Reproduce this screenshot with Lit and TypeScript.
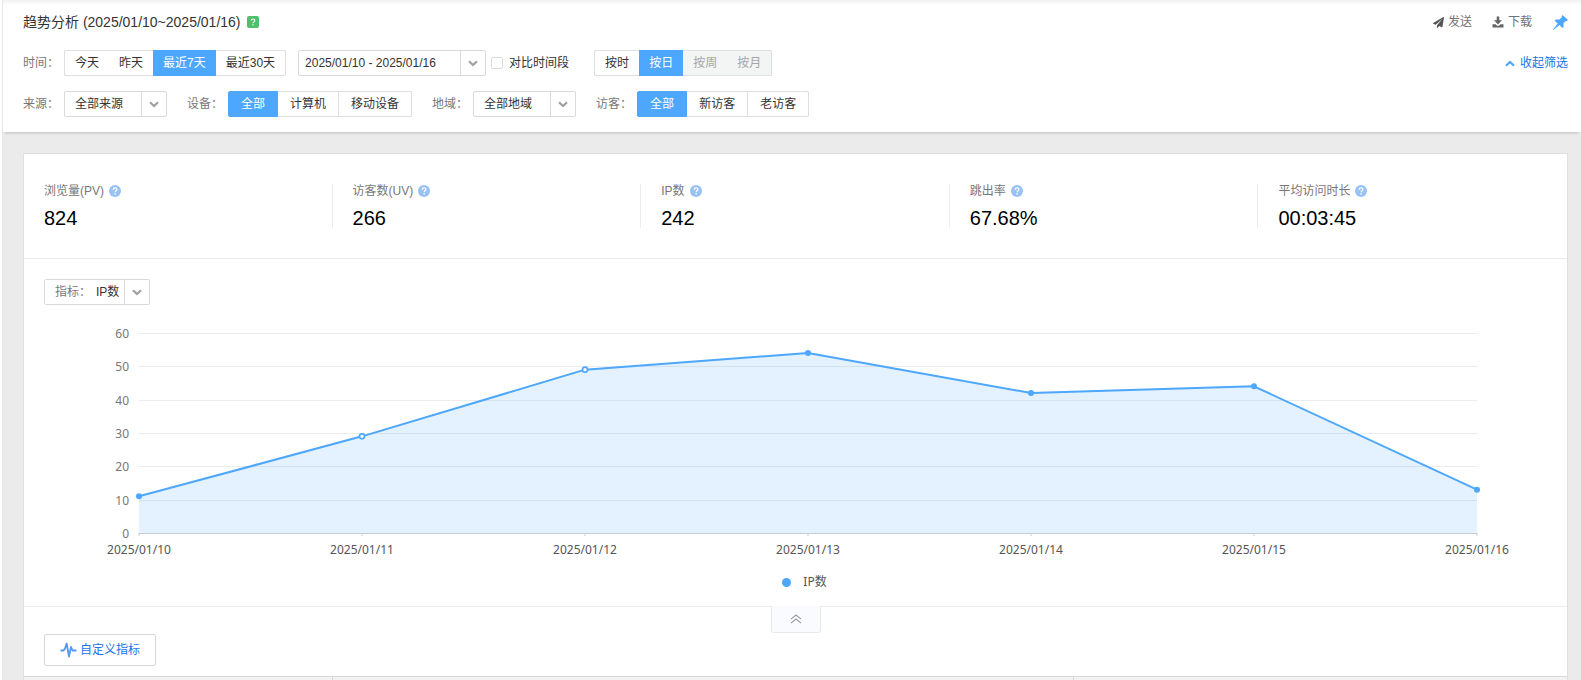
import { LitElement, html, css, svg } from "lit";
import { customElement, property, state } from "lit/decorators.js";
import { classMap } from "lit/directives/class-map.js";

const FONT = css`"Liberation Sans", Arial, "Noto Sans CJK SC", sans-serif`;

interface Item {
  label: string;
  disabled?: boolean;
}

@customElement("segment-group")
class SegmentGroup extends LitElement {
  @property({ attribute: false }) items: Item[] = [];
  @property({ type: Number }) selected = 0;
  @property({ type: Boolean, reflect: true }) divided = false;

  static styles = css`
    :host {
      display: block;
    }
    .group {
      display: flex;
      box-sizing: border-box;
      height: 26px;
      border: 1px solid #dedfe0;
      border-radius: 2px;
      background: #fff;
    }
    .item {
      margin: -1px 0;
      padding: 0 10px;
      border: 1px solid #dedfe0;
      border-width: 1px 0;
      background: transparent;
      font: 12px/24px ${FONT};
      color: #333;
      white-space: nowrap;
      cursor: pointer;
    }
    .item:first-child {
      margin-left: -1px;
      border-radius: 2px 0 0 2px;
      border-left-width: 1px;
    }
    .item:last-child {
      margin-right: -1px;
      border-right-width: 1px;
      border-radius: 0 2px 2px 0;
    }
    :host([divided]) .item {
      padding: 0 12px;
      border-right-width: 1px;
    }
    .item:disabled {
      background: #f3f4f4;
      color: #a6a6a6;
      cursor: default;
    }
    .group .item.active {
      background: #4da7fd;
      border-color: #4da7fd;
      color: #fff;
    }
  `;

  render() {
    return html`<div class="group" role="group">
      ${this.items.map(
        (it, i) => html`<button
          type="button"
          class=${classMap({ item: true, active: i === this.selected })}
          ?disabled=${it.disabled}
          aria-pressed=${i === this.selected}
          @click=${() => (this.selected = i)}
        >${it.label}</button>`
      )}
    </div>`;
  }
}

const chevron = html`<svg class="chevron" width="10" height="7" viewBox="0 0 10 7" aria-hidden="true">
  <path d="M1 1.2 5 5 9 1.2" fill="none" stroke="currentColor" stroke-width="2.2" />
</svg>`;

const help = html`<svg class="help" width="12" height="12" viewBox="0 0 12 12" role="img" aria-label="help">
  <circle cx="6" cy="6" r="6" fill="#97c2f3" />
  <path d="M4.2 4.7C4.2 2.4 7.9 2.4 7.9 4.6 7.9 5.8 6.1 5.9 6.1 7.3" fill="none" stroke="#fff" stroke-width="1.3" />
  <rect x="5.4" y="8.2" width="1.4" height="1.4" fill="#fff" />
</svg>`;

@customElement("trend-chart")
class TrendChart extends LitElement {
  @property({ attribute: false }) dates: string[] = [];
  @property({ attribute: false }) values: number[] = [];
  @property({ attribute: false }) hollow: number[] = [];
  @property() name = "";

  static styles = css`
    :host {
      display: block;
      padding: 28px 90px 0 90px;
    }
    .body {
      display: grid;
      grid-template-columns: 15px 1fr;
      column-gap: 10px;
    }
    .y-axis {
      display: flex;
      flex-direction: column;
      justify-content: space-between;
      align-items: flex-end;
      height: 202px;
      margin-bottom: -2px;
    }
    .y-label,
    .x-label {
      display: flex;
      align-items: center;
      justify-content: center;
      font: 12px/16px "Noto Sans", "Open Sans", sans-serif;
      white-space: nowrap;
    }
    .y-label {
      height: 2px;
      color: #777;
    }
    .plot {
      display: block;
      width: 100%;
      height: 200px;
      overflow: visible;
    }
    .x-axis {
      grid-column: 2;
      display: flex;
      justify-content: space-between;
      padding-top: 9px;
    }
    .x-label {
      width: 0;
      color: #555;
    }
    .legend {
      display: flex;
      align-items: center;
      justify-content: center;
      gap: 12px;
      height: 18px;
      margin-top: 15px;
      padding-left: 18px;
      font: 12px/18px "Noto Sans", "Noto Sans CJK SC", sans-serif;
      color: #555;
    }
    .dot {
      width: 9px;
      height: 9px;
      border-radius: 50%;
      background: #4da7fd;
    }
  `;

  render() {
    const max = 60;
    const ticks = [60, 50, 40, 30, 20, 10, 0];
    const last = Math.max(this.values.length - 1, 1);
    const y = (v: number) => 200 - (v / max) * 200;
    const gy = (v: number) => Math.round(y(v)) + 0.5;
    const line = this.values.map((v, i) => `${(i / last) * 1000},${y(v)}`).join(" ");
    return html`
      <div class="body">
        <div class="y-axis">${ticks.map((t) => html`<span class="y-label">${t}</span>`)}</div>
        <svg class="plot" role="img" aria-label=${this.name}>
          ${ticks.map(
            (t) => svg`<line x1="0" x2="100%" y1=${gy(t)} y2=${gy(t)} stroke=${t ? "#ececec" : "#ccc"} />`
          )}
          ${this.values.map((_, i) => {
            const x = `${(i / last) * 100}%`;
            return svg`<line x1=${x} x2=${x} y1="200" y2="203" stroke="#ccc" />`;
          })}
          <svg width="100%" height="200" viewBox="0 0 1000 200" preserveAspectRatio="none" overflow="visible">
            <polygon points="0,200 ${line} 1000,200" fill="#4da2fa" fill-opacity="0.15" />
            <polyline
              points=${line}
              fill="none"
              stroke="#4da7fd"
              stroke-width="2"
              stroke-linejoin="round"
              vector-effect="non-scaling-stroke"
            />
          </svg>
          ${this.values.map((v, i) => {
            const open = this.hollow.includes(i);
            return svg`<circle cx=${`${(i / last) * 100}%`} cy=${y(v)} r=${open ? 2.5 : 3}
              fill=${open ? "#fff" : "#4da7fd"} stroke="#4da7fd" stroke-width=${open ? 1.6 : 0} />`;
          })}
        </svg>
        <div class="x-axis">${this.dates.map((d) => html`<span class="x-label">${d}</span>`)}</div>
      </div>
      <div class="legend"><span class="dot"></span>${this.name}</div>
    `;
  }
}

@customElement("app-root")
class AppRoot extends LitElement {
  @state() private compare = false;

  static styles = css`
    :host {
      display: block;
      box-sizing: border-box;
      min-height: 100vh;
      padding-left: 2px;
      overflow: hidden;
      background: #fff;
      font: 12px/18px ${FONT};
      color: #333;
    }
    .page {
      min-height: 100vh;
      background: #ebebeb;
      border-left: 1px solid #e8e8e8;
      box-sizing: border-box;
    }
    .header {
      display: flex;
      flex-direction: column;
      height: 132px;
      box-sizing: border-box;
      padding: 12px 13px 15px 20px;
      background: linear-gradient(#f1f1f1, #fff 5px);
      box-shadow: 0 3px 3px -2px rgba(0, 0, 0, 0.2);
    }
    .row {
      display: flex;
      align-items: center;
    }
    .title-row {
      height: 20px;
      margin-bottom: 18px;
    }
    .filters {
      height: 26px;
      margin-bottom: 15px;
    }
    .title {
      margin: 0;
      font-size: 14px;
      line-height: 20px;
      font-weight: normal;
    }
    .badge {
      width: 12px;
      height: 12px;
      margin-left: 6px;
    }
    .push {
      margin-left: auto;
    }
    .action {
      display: flex;
      align-items: center;
      gap: 4px;
      margin-right: 20px;
      padding: 0;
      border: 0;
      background: none;
      font: inherit;
      color: #737373;
      cursor: pointer;
    }
    .action.pin {
      margin: 0;
      padding-left: 1px;
      color: #4da7fd;
    }
    .link {
      display: flex;
      align-items: center;
      gap: 5px;
      color: #1a73e8;
      text-decoration: none;
    }
    .link .chevron {
      color: #4da7fd;
      transform: rotate(180deg);
    }
    .label {
      margin-right: 5px;
      color: #777;
    }
    .spaced {
      margin-left: 20px;
    }
    .box {
      display: grid;
      grid-template-columns: auto 25px;
      box-sizing: border-box;
      height: 26px;
      border: 1px solid #d9d9d9;
      border-radius: 2px;
      background: #fff;
    }
    .box .native,
    .prefix {
      grid-row: 1;
      grid-column: 1;
    }
    .box .native {
      grid-column: 1 / 3;
      box-sizing: border-box;
      width: 101px;
      height: 24px;
      margin: 0;
      padding: 0 36px 0 10px;
      border: 0;
      outline-offset: -1px;
      appearance: none;
      background: transparent;
      font: 12px/24px ${FONT};
      color: #333;
    }
    .arrow {
      grid-row: 1;
      grid-column: 2;
      display: flex;
      align-items: center;
      justify-content: center;
      padding: 0;
      border: 0;
      border-left: 1px solid #d9d9d9;
      background: none;
      color: #a0a0a0;
      pointer-events: none;
    }
    .dates {
      margin-left: 12px;
    }
    .dates .native {
      width: 186px;
      padding: 0 30px 0 6px;
    }
    .check {
      display: flex;
      align-items: center;
      gap: 6px;
      margin: 0 25px 0 5px;
    }
    .tick {
      width: 12px;
      height: 12px;
      margin: 0;
      border: 1px solid #dcdcdc;
      border-radius: 2px;
      appearance: none;
      background: #fff;
    }
    .tick:checked {
      background: #4da7fd;
    }
    .card {
      margin: 21px 13px 0 20px;
      border: 1px solid #dfdfdf;
      background: #fff;
    }
    .stats {
      display: grid;
      grid-template-columns: repeat(5, 1fr);
      margin: 0;
      padding: 30px 0;
      border-bottom: 1px solid #ececec;
    }
    .stat {
      height: 44px;
      box-sizing: border-box;
      padding-left: 20px;
      border-right: 1px solid #ececec;
    }
    .stat:last-child {
      border-right: 0;
    }
    .stat-name {
      display: flex;
      align-items: center;
      gap: 5px;
      height: 14px;
      color: #777;
    }
    .stat-value {
      margin: 8px 0 0;
      font-size: 20px;
      line-height: 24px;
      color: #000;
    }
    .metric {
      display: inline-grid;
      margin: 20px 0 0 20px;
    }
    .prefix {
      padding-left: 10px;
      line-height: 24px;
      color: #777;
    }
    .metric .native {
      width: 104px;
      padding: 0 26px 0 51px;
    }
    .metric-row {
      display: flex;
    }
    .fold {
      display: flex;
      justify-content: center;
      height: 27px;
      margin-top: 15px;
      border-top: 1px solid #ececec;
    }
    .fold-tab {
      width: 50px;
      height: 27px;
      margin-top: -1px;
      padding: 0;
      border: 1px solid #e8e9ea;
      border-top: 0;
      border-radius: 0 0 3px 3px;
      background: #fafbfe;
      color: #999;
    }
    .custom {
      display: flex;
      align-items: center;
      gap: 3px;
      box-sizing: border-box;
      height: 32px;
      margin: 0 0 10px 20px;
      padding: 0 15px;
      border: 1px solid #d6d6d6;
      border-radius: 2px;
      background: #fff;
      font: inherit;
      color: #1a73e8;
    }
    .table {
      width: 100%;
      border-collapse: collapse;
      table-layout: fixed;
    }
    .col-a {
      width: 20%;
    }
    .col-b {
      width: 48%;
    }
    .th {
      height: 36px;
      padding: 0;
      border-top: 1px solid #d9d9d9;
      border-right: 1px solid #d9d9d9;
      background: #f3f3f3;
    }
    .th:last-child {
      border-right: 0;
    }
    .clip {
      height: 5px;
      overflow: hidden;
    }
  `;

  private select(id: string, value: string) {
    return html`<div class="box">
      <select class="native" id=${id}><option>${value}</option></select>
      <span class="arrow">${chevron}</span>
    </div>`;
  }

  render() {
    const stats = [
      ["浏览量(PV)", "824"],
      ["访客数(UV)", "266"],
      ["IP数", "242"],
      ["跳出率", "67.68%"],
      ["平均访问时长", "00:03:45"],
    ];
    return html`
      <div class="page">
        <header class="header">
          <div class="row title-row">
            <h1 class="title">趋势分析 (2025/01/10~2025/01/16)</h1>
            <svg class="badge" viewBox="0 0 12 12" role="img" aria-label="help">
              <rect width="12" height="12" rx="2" fill="#4fbf6b" />
              <path d="M4.3 4.6C4.3 2.4 7.8 2.4 7.8 4.6 7.8 5.8 6 5.9 6 7.3" fill="none" stroke="#fff" stroke-width="1.1" />
              <rect x="5.4" y="8.3" width="1.2" height="1.2" fill="#fff" />
            </svg>
            <button type="button" class="action push">
              <svg width="11" height="11" viewBox="0 0 1792 1792" fill="#555" aria-hidden="true">
                <path d="M1764 11q33 24 27 64l-256 1536q-5 29-32 45-14 8-31 8-11 0-24-5l-453-185-242 295q-18 23-49 23-13 0-22-4-19-7-30.5-23.5t-11.5-36.5v-349l864-1059-1069 925-395-162q-37-14-40-55-2-40 32-59l1664-960q15-9 32-9 20 0 36 11z" />
              </svg>发送
            </button>
            <button type="button" class="action">
              <svg width="12" height="12" viewBox="0 0 12 12" fill="#666" aria-hidden="true">
                <path d="M4.7 0.5H7.3V4.2H10L6 8.4 2 4.2H4.7ZM0.5 8.2H3.6L5 9.7H7L8.4 8.2H11.5V11.5H0.5Z" />
              </svg>下载
            </button>
            <button type="button" class="action pin" aria-label="固定">
              <svg width="15" height="15" viewBox="0 0 15 15" fill="currentColor" aria-hidden="true">
                <path d="M9.6 0 15 4.9 13.8 6.1 12.7 5.9 10.5 8.3 10.7 11.6 9.4 13 6.3 10.1 0.5 15 0 14.5 4.7 8.6 1.6 5.7 3 4.4 6.3 4.6 8.9 2.3 8.6 1.2Z" />
              </svg>
            </button>
          </div>
          <div class="row filters">
            <span class="label">时间：</span>
            <segment-group
              .items=${[{ label: "今天" }, { label: "昨天" }, { label: "最近7天" }, { label: "最近30天" }]}
              .selected=${2}
            ></segment-group>
            <div class="box dates">
              <input class="native" type="text" aria-label="日期" readonly value="2025/01/10 - 2025/01/16" />
              <button type="button" class="arrow" aria-label="选择日期">${chevron}</button>
            </div>
            <label class="check">
              <input
                class="tick"
                type="checkbox"
                .checked=${this.compare}
                @change=${() => (this.compare = !this.compare)}
              />对比时间段
            </label>
            <segment-group
              .items=${[
                { label: "按时" },
                { label: "按日" },
                { label: "按周", disabled: true },
                { label: "按月", disabled: true },
              ]}
              .selected=${1}
            ></segment-group>
            <a class="link push" href="#">${chevron}收起筛选</a>
          </div>
          <div class="row filters">
            <label class="label" for="source">来源：</label>
            ${this.select("source", "全部来源")}
            <span class="label spaced">设备：</span>
            <segment-group
              divided
              .items=${[{ label: "全部" }, { label: "计算机" }, { label: "移动设备" }]}
            ></segment-group>
            <label class="label spaced" for="area">地域：</label>
            ${this.select("area", "全部地域")}
            <span class="label spaced">访客：</span>
            <segment-group
              divided
              .items=${[{ label: "全部" }, { label: "新访客" }, { label: "老访客" }]}
            ></segment-group>
          </div>
        </header>
        <main class="card">
          <dl class="stats">
            ${stats.map(
              ([name, value]) => html`<div class="stat">
                <dt class="stat-name">${name}${help}</dt>
                <dd class="stat-value">${value}</dd>
              </div>`
            )}
          </dl>
          <div class="metric-row">
            <div class="box metric">
              <label class="prefix" for="metric">指标：</label>
              <select class="native" id="metric"><option>IP数</option></select>
              <span class="arrow">${chevron}</span>
            </div>
          </div>
          <trend-chart
            name="IP数"
            .dates=${[10, 11, 12, 13, 14, 15, 16].map((d) => `2025/01/${d}`)}
            .values=${[11, 29, 49, 54, 42, 44, 13]}
            .hollow=${[1, 2]}
          ></trend-chart>
          <div class="fold">
            <button type="button" class="fold-tab" aria-label="收起">
              <svg width="12" height="10" viewBox="0 0 12 10" aria-hidden="true">
                <path d="M1 5.2 6 1l5 4.2M1 9.2 6 5l5 4.2" fill="none" stroke="currentColor" stroke-width="1.1" />
              </svg>
            </button>
          </div>
          <button type="button" class="custom">
            <svg width="17" height="16" viewBox="0 0 17 16" aria-hidden="true">
              <path
                d="M0.5 8.5H3.6L5 6.5 6.6 1.5 9 14.5 11 5 12.6 8.5H16.5"
                fill="none"
                stroke="#5599ee"
                stroke-width="1.8"
                stroke-linejoin="round"
              /></svg>自定义指标
          </button>
          <div class="clip">
            <table class="table">
              <colgroup><col class="col-a" /><col class="col-b" /><col /></colgroup>
              <thead><tr><th class="th"></th><th class="th"></th><th class="th"></th></tr></thead>
            </table>
          </div>
        </main>
      </div>
    `;
  }
}
